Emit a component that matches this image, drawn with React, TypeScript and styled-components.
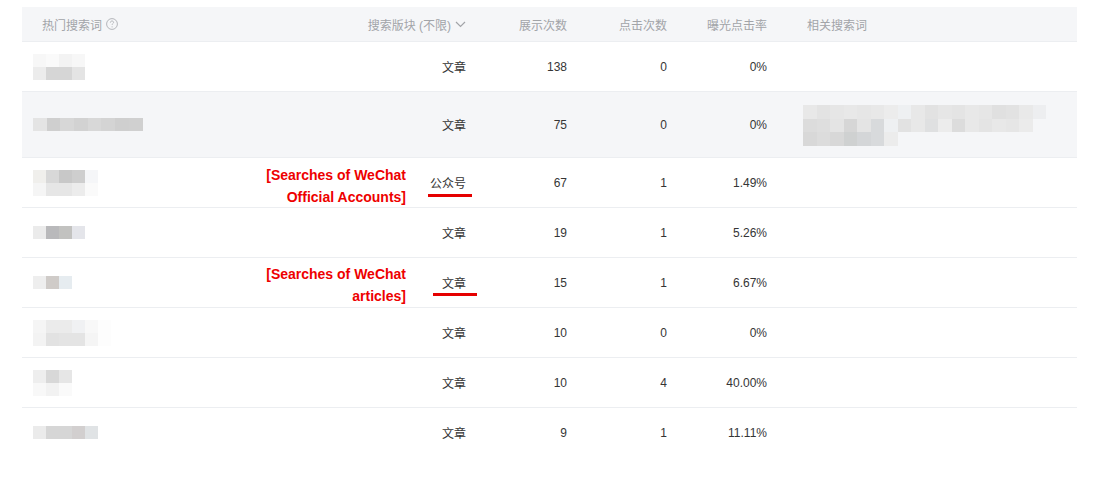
import React from "react";
import styled, { createGlobalStyle } from "styled-components";

const GlobalStyle = createGlobalStyle`
  html, body { margin: 0; padding: 0; background: #fff; }
  body { font-family: "Liberation Sans", "Noto Sans CJK SC", sans-serif; }
`;

const Page = styled.div`
  padding: 7px 21px 0 22px;
  width: 1055px;
`;

const Table = styled.div`
  display: flex;
  flex-direction: column;
`;

const Row = styled.div<{ head?: boolean; shade?: boolean; tall?: boolean; last?: boolean }>`
  display: grid;
  grid-template-columns: 278px 186px 101px 100px 100px 1fr;
  height: ${({ head, tall }) => (head ? 35 : tall ? 66 : 50)}px;
  background: ${({ head, shade }) => (head || shade ? "#f5f6f8" : "#fff")};
  border-bottom: 1px solid ${({ last }) => (last ? "transparent" : "#eceef1")};
  box-sizing: border-box;
  font-size: 12px;
  color: ${({ head }) => (head ? "#a2a4a8" : "#353535")};
`;

const Cell = styled.div<{ align?: "left" | "right" }>`
  position: relative;
  display: flex;
  align-items: center;
  justify-content: ${({ align }) => (align === "right" ? "flex-end" : "flex-start")};
  padding: ${({ align }) => (align === "right" ? "0 20px 0 0" : "0 0 0 20px")};
`;

const KeyCell = styled(Cell)`
  padding-left: 11px;
`;

const RelatedCell = styled(Cell)`
  padding-left: 16px;
  padding-top: 2px;
`;

const HeadLabel = styled.span`
  display: inline-flex;
  align-items: center;
  gap: 4px;
`;

const Mosaic = styled.div`
  display: flex;
  flex-direction: column;
  filter: blur(0.6px);
`;

const MosaicRow = styled.div`
  display: flex;
`;

const Tile = styled.span<{ size: number; tone: string }>`
  display: block;
  width: ${({ size }) => size}px;
  height: ${({ size }) => size}px;
  background: ${({ tone }) => tone};
`;

const Note = styled.div<{ right: number; top: number }>`
  position: absolute;
  right: ${({ right }) => right}px;
  top: ${({ top }) => top}px;
  text-align: right;
  color: #ee0000;
  font-family: "Liberation Sans", "Noto Sans", sans-serif;
  font-weight: 700;
  font-size: 14px;
  line-height: 22px;
  white-space: nowrap;
`;

const Underline = styled.div<{ left: number; top: number }>`
  position: absolute;
  left: ${({ left }) => left}px;
  top: ${({ top }) => top}px;
  width: 44px;
  height: 3px;
  background: #e50000;
`;

const Blur = ({ rows, size = 13 }: { rows: string[][]; size?: number }) => (
  <Mosaic>
    {rows.map((r, i) => (
      <MosaicRow key={i}>
        {r.map((t, j) => (
          <Tile key={j} size={size} tone={t} />
        ))}
      </MosaicRow>
    ))}
  </Mosaic>
);

const Help = () => (
  <svg width="12" height="12" viewBox="0 0 12 12">
    <circle cx="6" cy="6" r="5.4" fill="none" stroke="#b4b6ba" strokeWidth="1" />
    <path d="M4.4 4.6c0-1 .7-1.6 1.6-1.6s1.6.6 1.6 1.4c0 1.1-1.5 1.2-1.5 2.4" fill="none" stroke="#b4b6ba" strokeWidth="1" />
    <circle cx="6.1" cy="8.8" r=".6" fill="#b4b6ba" />
  </svg>
);

const Chevron = () => (
  <svg width="11" height="7" viewBox="0 0 11 7">
    <path d="M1 1l4.5 4.5L10 1" fill="none" stroke="#a2a4a8" strokeWidth="1.2" />
  </svg>
);

type Item = {
  key: string[][];
  kind: string;
  shows: string;
  clicks: string;
  rate: string;
  shade?: boolean;
  tall?: boolean;
  related?: string[][];
  note?: string[];
  noteTop?: number;
  lineLeft?: number;
  lineTop?: number;
};

const items: Item[] = [
  {
    key: [
      ["#f7f7f7", "#fafafa", "#f3f3f3", "#f7f7f7"],
      ["#ececec", "#d6d6d6", "#d6d6d6", "#e4e4e4"],
    ],
    kind: "文章", shows: "138", clicks: "0", rate: "0%",
  },
  {
    key: [["#e4e4e4", "#cfcfcf", "#d7d7d7", "#d2d2d2", "#d8d8d8", "#d4d4d4", "#cfcfcf", "#d0d0d0"]],
    kind: "文章", shows: "75", clicks: "0", rate: "0%", shade: true, tall: true,
    related: [
      ["#e8e8e8", "#e3e3e3", "#e6e6e6", "#e8e8e8", "#e6e6e6", "#e8e8e8", "#ececec", "#eef0f2", "#e8e8e8", "#e2e2e2", "#e6e6e6", "#e4e4e4", "#e8e8e8", "#e6e6e6", "#e0e0e0", "#e2e2e2", "#e9e9e9", "#edeef0"],
      ["#dcdcdc", "#dedede", "#e4e4e4", "#d6d6d6", "#e4e4e4", "#d8dadc", "#eef0f2", "#e2e2e2", "#e8e8e8", "#dfe0e1", "#ececec", "#dcdcdc", "#e8e8e8", "#e4e4e4", "#e8e8e8", "#e6e6e6", "#ebebeb", "#f5f6f8"],
      ["#d8d8d8", "#dcdcdc", "#d8d8d8", "#cfd1d1", "#d4d6d8", "#d8dadc", "#ececec", "#f5f6f8", "#f5f6f8", "#f5f6f8", "#f5f6f8", "#f5f6f8", "#f5f6f8", "#f5f6f8", "#f5f6f8", "#f5f6f8", "#f5f6f8", "#f5f6f8"],
    ],
  },
  {
    key: [
      ["#f0efec", "#d8d8d8", "#c8c8c8", "#cecece", "#f5f6f8"],
      ["#f5f5f5", "#e6e6e6", "#e6e6e6", "#ececec", "#fafafa"],
    ],
    kind: "公众号", shows: "67", clicks: "1", rate: "1.49%",
    note: ["[Searches of WeChat", "Official Accounts]"], noteTop: 6, lineLeft: 128, lineTop: 36,
  },
  {
    key: [["#ebebeb", "#b9b9bb", "#c2c2c0", "#e4e5ea"]],
    kind: "文章", shows: "19", clicks: "1", rate: "5.26%",
  },
  {
    key: [["#eeeeee", "#cfcbc8", "#e6ecf0"]],
    kind: "文章", shows: "15", clicks: "1", rate: "6.67%",
    note: ["[Searches of WeChat", "articles]"], noteTop: 5, lineLeft: 133, lineTop: 35,
  },
  {
    key: [
      ["#f5f5f5", "#ebebeb", "#ebebeb", "#f0f1f3", "#f8f8f8", "#fdfdfd"],
      ["#f3f3f3", "#e2e2e2", "#e4e4e4", "#e4e4e4", "#f5f5f5", "#fdfdfd"],
    ],
    kind: "文章", shows: "10", clicks: "0", rate: "0%",
  },
  {
    key: [
      ["#eeeeee", "#d8d8d8", "#e6e6e6"],
      ["#f8f8f8", "#f2f2f2", "#fafafa"],
    ],
    kind: "文章", shows: "10", clicks: "4", rate: "40.00%",
  },
  {
    key: [["#ebebeb", "#d6d6d6", "#d6d6d6", "#d2cfcf", "#e0e3e5"]],
    kind: "文章", shows: "9", clicks: "1", rate: "11.11%",
  },
];

export default function App() {
  return (
    <Page>
      <GlobalStyle />
      <Table>
        <Row head>
          <Cell>
            <HeadLabel>热门搜索词 <Help /></HeadLabel>
          </Cell>
          <Cell align="right">
            <HeadLabel>搜索版块 (不限) <Chevron /></HeadLabel>
          </Cell>
          <Cell align="right">展示次数</Cell>
          <Cell align="right">点击次数</Cell>
          <Cell align="right">曝光点击率</Cell>
          <Cell>相关搜索词</Cell>
        </Row>
        {items.map((it, i) => (
          <Row key={i} shade={it.shade} tall={it.tall} last={i === items.length - 1}>
            <KeyCell>
              <Blur rows={it.key} size={it.tall ? 13.7 : 13} />
            </KeyCell>
            <Cell align="right">
              {it.note && (
                <Note right={80} top={it.noteTop ?? 6}>
                  {it.note.map((l) => (
                    <div key={l}>{l}</div>
                  ))}
                </Note>
              )}
              {it.lineLeft !== undefined && <Underline left={it.lineLeft} top={it.lineTop ?? 36} />}
              {it.kind}
            </Cell>
            <Cell align="right">{it.shows}</Cell>
            <Cell align="right">{it.clicks}</Cell>
            <Cell align="right">{it.rate}</Cell>
            <RelatedCell>{it.related && <Blur rows={it.related} size={13.5} />}</RelatedCell>
          </Row>
        ))}
      </Table>
    </Page>
  );
}
